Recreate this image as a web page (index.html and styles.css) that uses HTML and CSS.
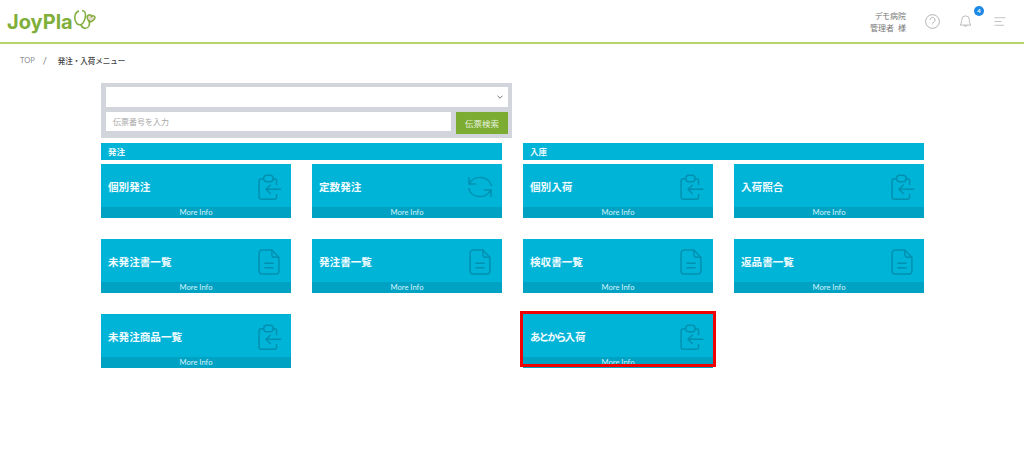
FILE: index.html
```html
<!DOCTYPE html>
<html lang="ja">
<head>
<meta charset="utf-8">
<title>発注・入荷メニュー</title>
<link rel="stylesheet" href="styles.css">
</head>
<body>
<svg class="defs" width="0" height="0" aria-hidden="true">
  <defs>
    <symbol id="i-in" viewBox="0 0 24 24"><path d="M7.500 5H5.500a2 2 0 0 0-2 2v13.500a2 2 0 0 0 2 2h11a2 2 0 0 0 2-2V18M15.500 5h1a2 2 0 0 1 2 2v3.500"/><rect x="7.500" y="2" width="8" height="5.500" rx="2.500"/><path d="M22.500 14H9.500M13.500 10l-4 4 4 4"/></symbol>
    <symbol id="i-doc" viewBox="0 0 24 24"><path d="M14.500 1.800H6a2.500 2.500 0 0 0-2.500 2.500v15.400A2.500 2.500 0 0 0 6 22.200h12a2.500 2.500 0 0 0 2.500-2.500V8z"/><path d="M14.500 1.800v3.700A2.500 2.500 0 0 0 17 8h3.500M8 13h8M8 17h8"/></symbol>
    <symbol id="i-sync" viewBox="0 0 24 24"><path d="M2.500 3.500v6h6M21.500 20.500v-6h-6"/><path d="M2.800 9.500A10 9.300 0 0 1 21.800 11M21.200 14.500A10 9.300 0 0 1 2.200 13"/></symbol>
  </defs>
</svg>
<header class="topbar">
  <div class="logo">
    <span class="logo-text">JoyPla</span>
    <svg class="logo-mark" viewBox="0 0 22 22" width="22" height="22"><path class="heart" d="M15.500 13C13 10 12 7 15 6c1.500-.5 2.500.5 2.500 1.500 1-1 3.500-1 3.500 1 0 2-3 4-5.500 4.500z"/><path class="tube" d="M5 2C1 3 0 8 1.500 12c1 3 3.500 4 5.500 3.500 3-1 4.500-6.500 4.500-9.500 0-2.500-1.500-4.500-3.500-4.500"/><path class="tube" d="M7 15.500c1 4.500 6 5 8 1.500 1-2 .5-4 0-6"/></svg>
  </div>
  <div class="top-right">
    <div class="user">デモ病院<br>管理者 様</div>
    <svg class="ti help" viewBox="0 0 24 24" width="15" height="15"><circle cx="12" cy="12" r="11"/><path d="M8 9.500a4 4 0 1 1 6 3.500c-1.500.8-2 1.500-2 3.500M12 19v.5"/></svg>
    <div class="bell">
      <svg class="ti" viewBox="0 0 24 24" width="13" height="14"><path d="M12 2.500a7 7 0 0 0-7 7c0 6-1.500 8-3 10h20c-1.500-2-3-4-3-10a7 7 0 0 0-7-7zM9.500 19.500a2.500 2.500 0 0 0 5 0"/></svg>
      <span class="badge">4</span>
    </div>
    <svg class="ti menu" viewBox="0 0 24 18" width="12" height="9"><path d="M1 1.500h22M1 9h14M1 16.500h19"/></svg>
  </div>
</header>
<nav class="crumbs"><span class="crumb-top">TOP</span><span class="crumb-sep">/</span><span class="crumb-cur">発注・入荷メニュー</span></nav>
<main class="content">
  <form class="search">
    <div class="select"><svg viewBox="0 0 10 6" width="6" height="4"><path d="M1 1l4 4 4-4"/></svg></div>
    <div class="search-row">
      <input class="input" type="text" placeholder="伝票番号を入力">
      <button class="btn" type="button">伝票検索</button>
    </div>
  </form>
  <div class="columns">
    <section class="col">
      <h2 class="bar">発注</h2>
      <div class="cards">
        <a class="card"><span class="card-main"><span class="card-title">個別発注</span><svg class="card-icon"><use href="#i-in"/></svg></span><span class="card-more">More Info</span></a>
        <a class="card"><span class="card-main"><span class="card-title">定数発注</span><svg class="card-icon"><use href="#i-sync"/></svg></span><span class="card-more">More Info</span></a>
        <a class="card"><span class="card-main"><span class="card-title">未発注書一覧</span><svg class="card-icon"><use href="#i-doc"/></svg></span><span class="card-more">More Info</span></a>
        <a class="card"><span class="card-main"><span class="card-title">発注書一覧</span><svg class="card-icon"><use href="#i-doc"/></svg></span><span class="card-more">More Info</span></a>
        <a class="card"><span class="card-main"><span class="card-title">未発注商品一覧</span><svg class="card-icon"><use href="#i-in"/></svg></span><span class="card-more">More Info</span></a>
      </div>
    </section>
    <section class="col">
      <h2 class="bar">入庫</h2>
      <div class="cards">
        <a class="card"><span class="card-main"><span class="card-title">個別入荷</span><svg class="card-icon"><use href="#i-in"/></svg></span><span class="card-more">More Info</span></a>
        <a class="card"><span class="card-main"><span class="card-title">入荷照合</span><svg class="card-icon"><use href="#i-in"/></svg></span><span class="card-more">More Info</span></a>
        <a class="card"><span class="card-main"><span class="card-title">検収書一覧</span><svg class="card-icon"><use href="#i-doc"/></svg></span><span class="card-more">More Info</span></a>
        <a class="card"><span class="card-main"><span class="card-title">返品書一覧</span><svg class="card-icon"><use href="#i-doc"/></svg></span><span class="card-more">More Info</span></a>
        <a class="card card-marked"><span class="card-main"><span class="card-title"><span class="kana">あとから</span>入荷</span><svg class="card-icon"><use href="#i-in"/></svg></span><span class="card-more">More Info</span></a>
      </div>
    </section>
  </div>
</main>
</body>
</html>
```
FILE: styles.css
```css
* { box-sizing: border-box; }
html, body { margin: 0; padding: 0; background: #fff; }
body {
  width: 1024px;
  height: 465px;
  overflow: hidden;
  font-family: "Lato", "Noto Sans CJK JP", sans-serif;
  color: #666;
}
.defs { display: block; height: 0; }

.topbar {
  height: 44px;
  border-bottom: 2px solid #b5d56a;
  display: flex;
  align-items: center;
  justify-content: space-between;
  padding: 0 18px 0 7px;
}
.logo { display: flex; align-items: flex-start; height: 30px; margin-top: 1px; }
.logo-text {
  font-family: "Inter", sans-serif;
  font-weight: 700;
  font-size: 20px;
  line-height: 30px;
  color: #7fae3a;
}
.logo-mark { margin: 2px 0 0 1px; }
.tube { fill: none; stroke: #7fae3a; stroke-width: 1.500; }
.heart { fill: #ecdcd8; stroke: #7fae3a; stroke-width: 1.500; }

.top-right { display: flex; align-items: center; }
.user {
  font-size: 8px;
  line-height: 12px;
  text-align: right;
  color: #777;
  width: 57px;
  margin-top: 2px;
  font-feature-settings: "palt";
  word-spacing: 2px;
}
.ti { fill: none; stroke: #a3a3a3; stroke-width: 1.300; display: block; }
.help { margin-left: 19px; }
.bell { position: relative; margin-left: 19px; }
.badge {
  position: absolute;
  top: -8px;
  right: -12px;
  width: 10px;
  height: 10px;
  border-radius: 50%;
  background: #1e88e5;
  color: #fff;
  font-size: 6px;
  font-weight: 700;
  line-height: 10px;
  text-align: center;
}
.menu { margin-left: 22px; }

.crumbs {
  display: flex;
  align-items: center;
  height: 13px;
  margin: 10px 0 0 20px;
  font-size: 7.500px;
}
.crumb-top { color: #8a8f96; }
.crumb-sep { color: #777; margin: 0 11px 0 8px; font-size: 9px; }
.crumb-cur { color: #444; font-weight: 500; }

.content { width: 823px; margin: 16px 0 0 101px; }

.search {
  width: 411px;
  height: 55px;
  background: #d2d5dc;
  padding: 4px 4px 4px 5px;
}
.select {
  height: 20px;
  background: #fff;
  display: flex;
  align-items: center;
  justify-content: flex-end;
  padding-right: 5px;
}
.select path { fill: none; stroke: #666; stroke-width: 1.500; }
.search-row { display: flex; justify-content: space-between; margin-top: 5px; }
.input {
  width: 345px;
  height: 19px;
  border: 0;
  padding: 0 7px;
  background: #fff;
  font: 8px "Noto Sans CJK JP", sans-serif;
}
.input::placeholder { color: #a9a9a9; opacity: 1; }
.btn {
  width: 52px;
  height: 22px;
  border: 0;
  padding: 0;
  background: #7dac33;
  color: #e9f2dc;
  font: 8.500px "Noto Sans CJK JP", sans-serif;
}

.columns { display: flex; gap: 21px; margin-top: 5px; }
.col { width: 401px; }
.bar {
  height: 17px;
  margin: 0;
  padding-left: 7px;
  background: #00b4d8;
  color: #eafaff;
  font-size: 8.500px;
  font-weight: 700;
  line-height: 18px;
}
.cards {
  display: grid;
  grid-template-columns: 190px 190px;
  grid-auto-rows: 54px;
  column-gap: 21px;
  row-gap: 21px;
  margin-top: 4px;
}
.card {
  position: relative;
  display: flex;
  flex-direction: column;
  background: #00b4d8;
  color: #fff;
}
.card-main {
  flex: 1;
  display: flex;
  align-items: center;
  justify-content: space-between;
  padding: 2px 0 0 7px;
}
.card-title { font-size: 10.600px; font-weight: 700; color: #f0fbff; }
.kana { letter-spacing: -2px; }
.card-icon {
  width: 28px;
  height: 28px;
  margin-right: 8px;
  fill: none;
  stroke: #0190b0;
  stroke-width: 1.250;
}
.card-more {
  height: 11px;
  background: #00a2c3;
  font-size: 7.600px;
  line-height: 11px;
  text-align: center;
  color: #d5f2fa;
}
.card-marked::after {
  content: "";
  position: absolute;
  inset: -3px -3px 1px -3px;
  border: 3px solid #f00000;
  pointer-events: none;
}
```
